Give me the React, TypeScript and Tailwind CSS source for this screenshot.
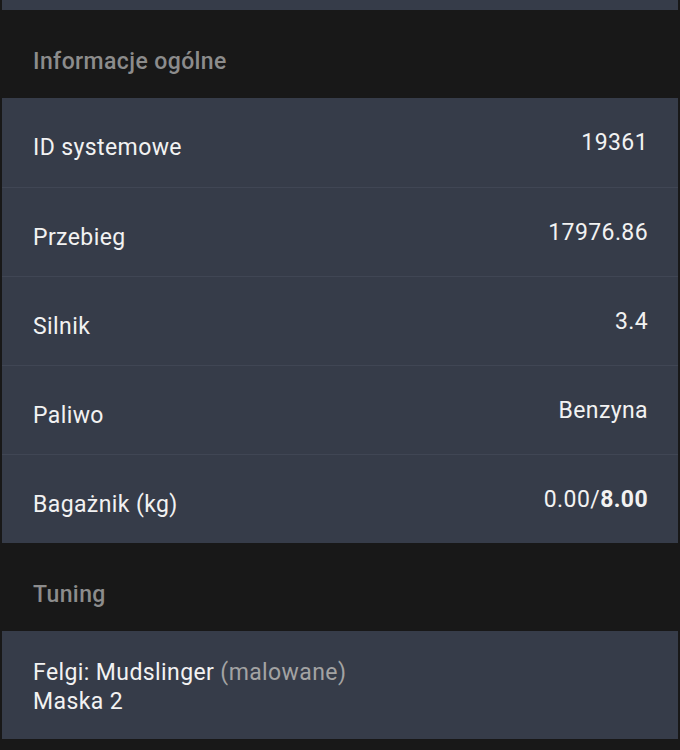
const rows: { label: string; value: React.ReactNode }[] = [
  { label: 'ID systemowe', value: '19361' },
  { label: 'Przebieg', value: '17976.86' },
  { label: 'Silnik', value: '3.4' },
  { label: 'Paliwo', value: 'Benzyna' },
  {
    label: 'Bagażnik (kg)',
    value: (
      <>
        0.00/<span className="font-bold">8.00</span>
      </>
    ),
  },
];

function SectionHeader({ title }: { title: string }) {
  return (
    <div className="h-[88px] pt-[40px] pl-[33px]">
      <h2 className="text-[23px] leading-[24px] tracking-[0.4px] font-medium text-[#8c8c8c]">{title}</h2>
    </div>
  );
}

export default function App() {
  return (
    <div
      className="w-[680px] h-[750px] overflow-hidden bg-[#181818] text-[#f2f2f2]"
      style={{ fontFamily: 'Roboto, "Noto Sans", sans-serif' }}
    >
      <div className="h-[10px] mx-[2px] bg-[#363c49]" />

      <SectionHeader title="Informacje ogólne" />

      <div className="mx-[2px] bg-[#363c49]">
        {rows.map((row, i) => (
          <div
            key={row.label}
            className={`flex justify-between items-start pl-[31px] pr-[30px] pt-[32px] text-[23px] leading-[26px] tracking-[0.4px] ${
              i === 0 ? 'h-[89px]' : 'h-[89px] border-t border-[#404654]'
            }`}
          >
            <span className="mt-[5px]">{row.label}</span>
            <span>{row.value}</span>
          </div>
        ))}
      </div>

      <SectionHeader title="Tuning" />

      <div className="mx-[2px] h-[108px] bg-[#363c49] pl-[31px] pt-[27px] text-[23px] leading-[29px] tracking-[0.4px]">
        <div>
          Felgi: Mudslinger <span className="text-[#a3a3a3]">(malowane)</span>
        </div>
        <div>Maska 2</div>
      </div>
    </div>
  );
}
